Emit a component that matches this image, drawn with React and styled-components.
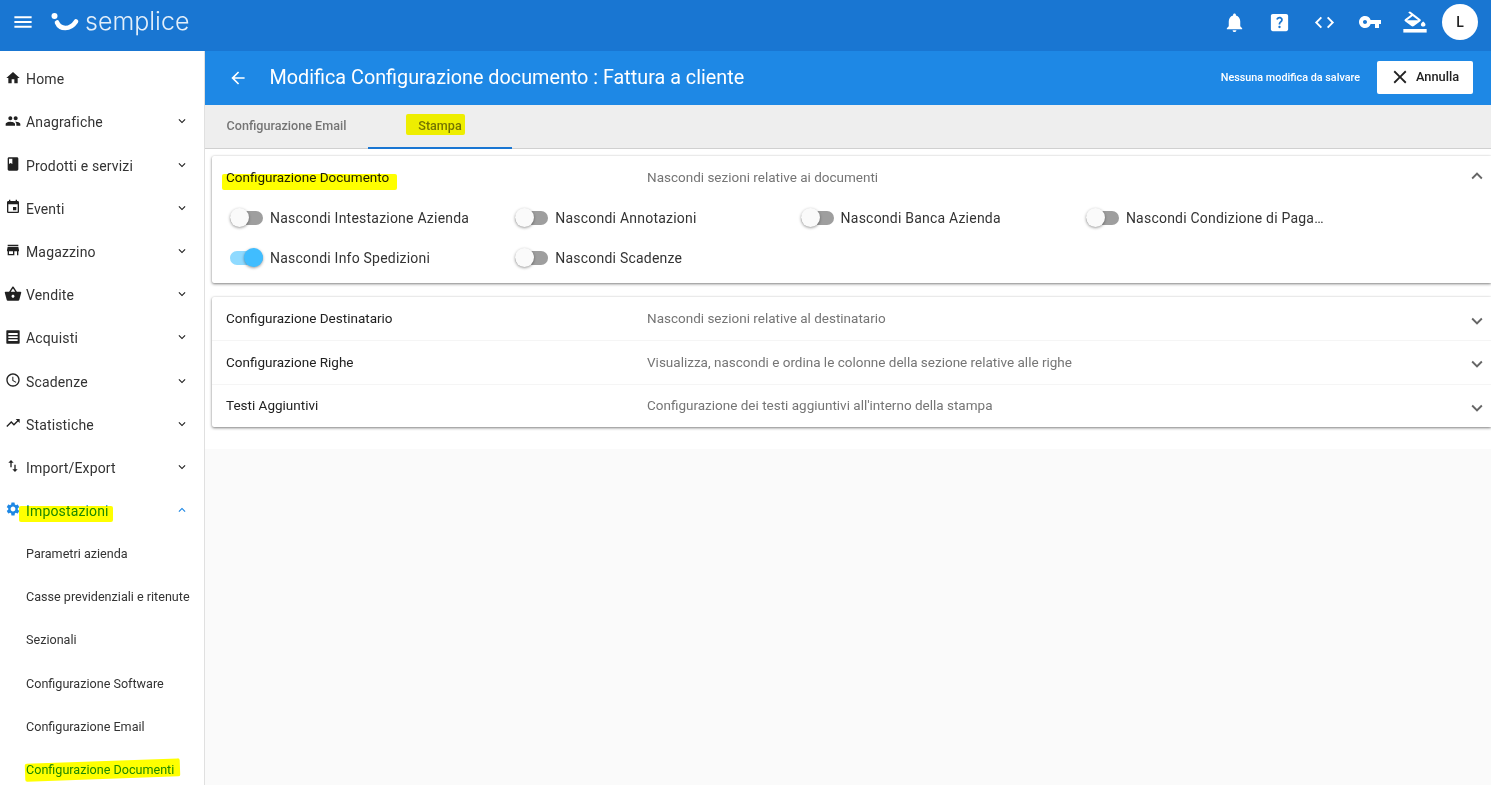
import styled, { createGlobalStyle } from "styled-components";
import {
  MdMenu, MdHome, MdPeople, MdBook, MdEvent, MdStore, MdShoppingBasket, MdSchedule,
  MdTrendingUp, MdSwapVert, MdSettings, MdNotifications, MdHelpCenter, MdCode, MdVpnKey,
  MdFormatColorFill, MdArrowBack, MdClose, MdExpandMore, MdExpandLess,
} from "react-icons/md";

const GlobalStyle = createGlobalStyle`
  html, body {
    margin: 0;
    height: 100%;
    overflow: hidden;
    background: #fff;
    font-family: Roboto, "Liberation Sans", sans-serif;
    color: #212121;
  }
`;

const ListBox = () => (
  <svg width="1em" height="1em" viewBox="0 0 24 24">
    <path
      fill="currentColor"
      fillRule="evenodd"
      d="M3 2h18a1 1 0 0 1 1 1v18a1 1 0 0 1-1 1H3a1 1 0 0 1-1-1V3a1 1 0 0 1 1-1zm2 4v3h14V6H5zm0 5v2.500h14V11H5zm0 4.500V18h14v-2.500H5z"
    />
  </svg>
);

const menu = [
  { label: "Home", icon: MdHome },
  { label: "Anagrafiche", icon: MdPeople, chevron: true },
  { label: "Prodotti e servizi", icon: MdBook, chevron: true },
  { label: "Eventi", icon: MdEvent, chevron: true },
  { label: "Magazzino", icon: MdStore, chevron: true },
  { label: "Vendite", icon: MdShoppingBasket, chevron: true, big: true },
  { label: "Acquisti", icon: ListBox, chevron: true },
  { label: "Scadenze", icon: MdSchedule, chevron: true },
  { label: "Statistiche", icon: MdTrendingUp, chevron: true },
  { label: "Import/Export", icon: MdSwapVert, chevron: true },
];

const subMenu = ["Parametri azienda", "Casse previdenziali e ritenute", "Sezionali", "Configurazione Software", "Configurazione Email"];

const switches = [
  { label: "Nascondi Intestazione Azienda" },
  { label: "Nascondi Annotazioni" },
  { label: "Nascondi Banca Azienda" },
  { label: "Nascondi Condizione di Pagamento" },
  { label: "Nascondi Info Spedizioni", on: true },
  { label: "Nascondi Scadenze" },
];

const panels = [
  { title: "Configurazione Destinatario", text: "Nascondi sezioni relative al destinatario" },
  { title: "Configurazione Righe", text: "Visualizza, nascondi e ordina le colonne della sezione relative alle righe" },
  { title: "Testi Aggiuntivi", text: "Configurazione dei testi aggiuntivi all'interno della stampa" },
];

const Logo = () => (
  <LogoWrap>
    <svg width="30" height="20" viewBox="0 0 30 20">
      <circle cx="3.5" cy="4" r="3" fill="#fff" />
      <path d="M6 10.500c3 7 13 8 19-1" fill="none" stroke="#fff" strokeWidth="4.600" strokeLinecap="round" />
    </svg>
    <LogoText>semplice</LogoText>
  </LogoWrap>
);

const Toggle = ({ label, on }) => (
  <SwitchRow>
    <Track $on={on}>
      <Thumb $on={on} />
    </Track>
    <SwitchLabel>{label}</SwitchLabel>
  </SwitchRow>
);

const App = () => {
  return (
    <>
      <GlobalStyle />
      <Page>
        <TopBar>
          <MenuButton><MdMenu /></MenuButton>
          <Logo />
          <TopActions>
            <TopIcon $size={23}><MdNotifications /></TopIcon>
            <TopIcon $size={23}><MdHelpCenter /></TopIcon>
            <TopIcon $size={23}><MdCode /></TopIcon>
            <TopIcon $size={24}><MdVpnKey /></TopIcon>
            <FillIcon $size={28}><MdFormatColorFill /></FillIcon>
            <Avatar>L</Avatar>
          </TopActions>
        </TopBar>
        <Body>
          <Sidebar>
            {menu.map((item) => (
              <NavItem key={item.label}>
                <NavIcon $big={item.big}><item.icon /></NavIcon>
                <NavLabel>{item.label}</NavLabel>
                {item.chevron && <NavChevron><MdExpandMore /></NavChevron>}
              </NavItem>
            ))}
            <NavItem $active>
              <NavIcon><MdSettings /></NavIcon>
              <NavLabel $active>
                <Marker $t={3} $r={-4} $b={-3} $l={-7}>Impostazioni</Marker>
              </NavLabel>
              <NavChevron><MdExpandLess /></NavChevron>
            </NavItem>
            {subMenu.map((label) => (
              <SubItem key={label}>{label}</SubItem>
            ))}
            <SubItem $active>
              <Marker $t={-1} $r={-6} $b={-2} $l={-1} $tilt={-2}>Configurazione Documenti</Marker>
            </SubItem>
          </Sidebar>
          <Main>
            <PageHeader>
              <BackButton><MdArrowBack /></BackButton>
              <PageTitle>Modifica Configurazione documento : Fattura a cliente</PageTitle>
              <SaveState>Nessuna modifica da salvare</SaveState>
              <CancelButton><MdClose />Annulla</CancelButton>
            </PageHeader>
            <Tabs>
              <Tab>Configurazione Email</Tab>
              <Tab $active>
                <Marker $t={-4} $r={-3} $b={-2} $l={-12}>Stampa</Marker>
              </Tab>
            </Tabs>
            <Content>
              <Card>
                <PanelHeader $open>
                  <PanelTitle>
                    <Marker $t={5} $r={-8} $b={-5} $l={-4}>Configurazione Documento</Marker>
                  </PanelTitle>
                  <PanelText>Nascondi sezioni relative ai documenti</PanelText>
                  <PanelChevron $open><MdExpandLess /></PanelChevron>
                </PanelHeader>
                <SwitchGrid>
                  {switches.map((s) => (
                    <Toggle key={s.label} label={s.label} on={s.on} />
                  ))}
                </SwitchGrid>
              </Card>
              <Card>
                {panels.map((p) => (
                  <PanelHeader key={p.title}>
                    <PanelTitle>{p.title}</PanelTitle>
                    <PanelText>{p.text}</PanelText>
                    <PanelChevron><MdExpandMore /></PanelChevron>
                  </PanelHeader>
                ))}
              </Card>
            </Content>
            <Rest />
          </Main>
        </Body>
      </Page>
    </>
  );
};

export default App;

const Page = styled.div`
  width: 1491px;
  height: 785px;
  display: flex;
  flex-direction: column;
  overflow: hidden;
`;

const TopBar = styled.header`
  flex: none;
  height: 51px;
  display: flex;
  align-items: center;
  padding: 0 13px 7px 13px;
  box-sizing: border-box;
  background: #1976d2;
  color: #fff;
`;

const MenuButton = styled.div`
  display: flex;
  font-size: 20px;
  svg { transform: scale(1.15); }
`;

const LogoWrap = styled.div`
  display: flex;
  align-items: center;
  margin-left: 18px;
  gap: 4px;
`;

const LogoText = styled.span`
  font-family: Inter, "Open Sans", sans-serif;
  font-weight: 300;
  font-size: 25px;
  line-height: 24px;
  margin-top: -3px;
  color: #e3effa;
`;

const TopActions = styled.div`
  margin-left: auto;
  display: flex;
  align-items: center;
`;

const TopIcon = styled.div`
  width: 45px;
  display: flex;
  justify-content: center;
  font-size: ${(p) => p.$size}px;
`;

const FillIcon = styled(TopIcon)`
  svg { transform: scaleY(0.76); }
`;

const Avatar = styled.div`
  width: 36px;
  height: 36px;
  margin-left: 5px;
  border-radius: 50%;
  background: #fff;
  color: #212121;
  font-size: 14px;
  font-weight: 500;
  display: flex;
  align-items: center;
  justify-content: center;
`;

const Body = styled.div`
  flex: 1;
  min-height: 0;
  display: flex;
`;

const Sidebar = styled.nav`
  flex: none;
  width: 204px;
  padding-top: 6.6px;
  background: #fff;
  border-right: 1px solid #e0e0e0;
  overflow: hidden;
`;

const NavItem = styled.div`
  height: ${(p) => (p.$active ? "42.4px" : "43.2px")};
  display: flex;
  align-items: center;
  padding: 0 15px 0 5px;
  font-size: 14px;
  color: ${(p) => (p.$active ? "#1e88e5" : "#212121")};
`;

const NavIcon = styled.span`
  width: 21px;
  display: flex;
  font-size: ${(p) => (p.$big ? "18px" : "16px")};
  margin-top: -3px;
  margin-left: ${(p) => (p.$big ? "-1px" : "0")};
  margin-right: ${(p) => (p.$big ? "1px" : "0")};
`;

const NavLabel = styled.span`
  flex: 1;
  color: ${(p) => (p.$active ? "#1e88e5" : "#333")};
  letter-spacing: 0.15px;
`;

const NavChevron = styled.span`
  display: flex;
  font-size: 14px;
  margin-top: -2px;
`;

const SubItem = styled.div`
  height: 43.2px;
  display: flex;
  align-items: center;
  padding-left: 26px;
  font-size: 12.6px;
  color: ${(p) => (p.$active ? "#1e88e5" : "#333")};
  white-space: nowrap;
`;

const Marker = styled.span`
  position: relative;
  &::after {
    content: "";
    position: absolute;
    top: ${(p) => p.$t}px;
    right: ${(p) => p.$r}px;
    bottom: ${(p) => p.$b}px;
    left: ${(p) => p.$l}px;
    background: #ffff00;
    border-radius: 2px;
    mix-blend-mode: multiply;
    transform: rotate(${(p) => p.$tilt || 0}deg);
  }
`;

const Main = styled.main`
  flex: 1;
  min-width: 0;
  display: flex;
  flex-direction: column;
`;

const PageHeader = styled.div`
  flex: none;
  height: 54px;
  display: flex;
  align-items: center;
  padding: 0 18px 0 24px;
  box-sizing: border-box;
  background: #1e88e5;
  color: #fff;
`;

const BackButton = styled.div`
  display: flex;
  font-size: 18px;
  width: 40.5px;
  margin-top: -1px;
  svg { transform: scale(1.1); }
`;

const PageTitle = styled.h1`
  flex: 1;
  margin: -1px 0 0;
  font-size: 19.8px;
  font-weight: 400;
`;

const SaveState = styled.span`
  font-size: 10.8px;
  font-weight: 500;
  margin-right: 17px;
  margin-top: -1px;
`;

const CancelButton = styled.button`
  width: 96px;
  height: 33px;
  margin-top: -1px;
  padding: 0 2px 2px 0;
  display: flex;
  align-items: center;
  justify-content: center;
  gap: 5px;
  border: 0;
  border-radius: 2px;
  background: #fff;
  color: #212121;
  font-family: inherit;
  font-size: 12.8px;
  font-weight: 500;
  svg { font-size: 22px; margin-top: 1px; }
`;

const Tabs = styled.div`
  flex: none;
  height: 44px;
  display: flex;
  box-sizing: border-box;
  background: #eee;
  border-bottom: 1px solid #d0d0d0;
`;

const Tab = styled.div`
  width: ${(p) => (p.$active ? "144px" : "163px")};
  display: flex;
  align-items: center;
  justify-content: center;
  box-sizing: border-box;
  padding-bottom: 1px;
  font-size: 12.6px;
  font-weight: 500;
  color: #757575;
  border-bottom: 2px solid ${(p) => (p.$active ? "#1976d2" : "transparent")};
  margin-bottom: -1px;
`;

const Content = styled.div`
  flex: none;
  height: 300px;
  padding: 7px 0 0 7px;
  box-sizing: border-box;
  background: #fff;
`;

const Card = styled.section`
  background: #fff;
  border-radius: 2px 0 0 2px;
  box-shadow: 0 1px 3px rgba(0, 0, 0, 0.5), 0 0 2px rgba(0, 0, 0, 0.06);
  margin-bottom: 14px;
`;

const PanelHeader = styled.div`
  height: ${(p) => (p.$open ? "45px" : "43.3px")};
  display: flex;
  align-items: center;
  padding: ${(p) => (p.$open ? "0 3px 3px 14px" : "0 3px 1px 14px")};
  box-sizing: border-box;
  border-top: ${(p) => (p.$open ? "0" : "1px solid #f5f5f5")};
  font-size: 13.5px;
  &:first-child { border-top: 0; }
`;

const PanelTitle = styled.div`
  width: 421px;
  color: #212121;
`;

const PanelText = styled.div`
  flex: 1;
  color: #757575;
`;

const PanelChevron = styled.span`
  display: flex;
  font-size: 22px;
  color: #666;
  margin-top: ${(p) => (p.$open ? "-2px" : "5px")};
`;

const SwitchGrid = styled.div`
  display: grid;
  grid-template-columns: repeat(4, 285.3px);
  grid-auto-rows: 40px;
  padding: 0 0 2px 18px;
`;

const SwitchRow = styled.div`
  display: flex;
  align-items: center;
  gap: 7px;
  height: 34px;
`;

const Track = styled.span`
  position: relative;
  flex: none;
  width: 33px;
  height: 14px;
  border-radius: 7px;
  background: ${(p) => (p.$on ? "#8fdaff" : "#9e9e9e")};
`;

const Thumb = styled.span`
  position: absolute;
  top: -3px;
  left: ${(p) => (p.$on ? "14px" : "0")};
  width: 19px;
  height: 19px;
  border-radius: 50%;
  background: ${(p) => (p.$on ? "#40bdff" : "#fafafa")};
  box-shadow: 0 1px 3px rgba(0, 0, 0, 0.4);
`;

const SwitchLabel = styled.span`
  width: 202px;
  font-size: 14px;
  letter-spacing: 0.22px;
  color: #333;
  white-space: nowrap;
  overflow: hidden;
  text-overflow: ellipsis;
`;

const Rest = styled.div`
  flex: 1;
  background: #fafafa;
`;
